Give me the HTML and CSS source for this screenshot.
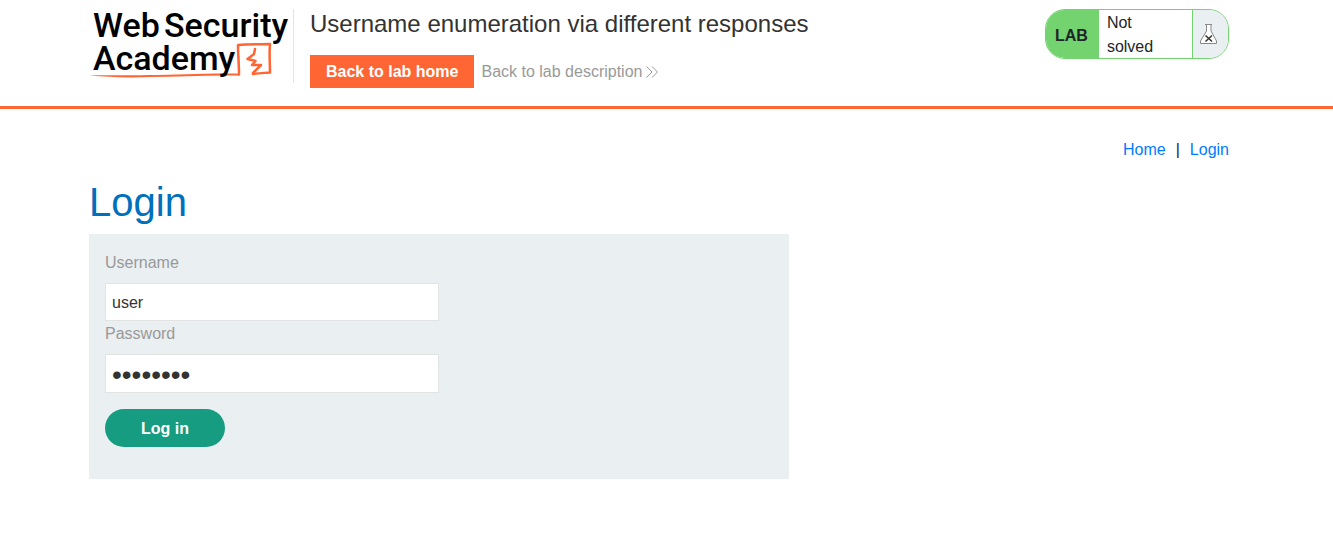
FILE: index.html
```html
<!DOCTYPE html>
<html lang="en">
<head>
<meta charset="utf-8">
<title>Username enumeration via different responses</title>
<link rel="stylesheet" href="styles.css">
</head>
<body>
<header class="lab-header">
  <div class="container header-row">
    <div class="logo">
      <svg width="204" height="74" viewBox="0 0 204 74" role="img" aria-label="Web Security Academy">
        <path d="M0 66.500 C20 65.500 40 67 60 66 C90 65.500 115 64 150 64.500 V66.500 C120 66 90 67.500 60 68 C35 69 20 68 0 66.500 Z" class="sketch-line"/>
        <path d="M150 65.500 C150 55 149 45 149 36 C160 34.500 170 35.500 181 35 C180 45 181 55 181 63.500 C175 64 170 64 164 65" class="sketch"/>
        <path d="M166 40 L165 45 L158.500 50 L166.500 52 L163 56 L172 56 L164 64" class="sketch"/>
        <g class="logo-text">
          <text x="4" y="28">Web</text>
          <text x="75" y="28">Security</text>
          <text x="4" y="61">Academy</text>
        </g>
      </svg>
    </div>
    <div class="title-block">
      <h2 class="lab-title">Username enumeration via different responses</h2>
      <div class="lab-links">
        <a class="button-orange" href="#">Back to lab home</a>
        <a class="link-back" href="#">Back to lab description
          <svg width="12" height="12" viewBox="0 0 12 12" aria-hidden="true"><path d="M0.500 0.500 L6 6 L0.500 11.500 M6 0.500 L11.500 6 L6 11.500"/></svg>
        </a>
      </div>
    </div>
    <div class="lab-status">
      <span class="status-tag">LAB</span>
      <p class="status-text">Not solved</p>
      <span class="status-icon">
        <svg width="18" height="20" viewBox="0 0 18 20" aria-hidden="true">
          <path class="flask" d="M5 0.500 H12 M6.500 1 V7 L0.500 17 V19.500 H16.500 V17 L11 7 V1"/>
          <path class="cross" d="M5.500 11.500 L12 17.500 M12 11.500 L5.500 17.500"/>
        </svg>
      </span>
    </div>
  </div>
</header>
<main class="container">
  <nav class="top-links"><a href="#">Home</a><span>|</span><a href="#">Login</a></nav>
  <h1 class="page-title">Login</h1>
  <form class="login-form">
    <label for="username">Username</label>
    <input id="username" type="text" value="user">
    <label for="password">Password</label>
    <input id="password" class="password" type="password" value="password">
    <button type="submit">Log in</button>
  </form>
</main>
</body>
</html>
```
FILE: styles.css
```css
* {
  box-sizing: border-box;
}

body {
  margin: 0;
  background: #fff;
  color: #212529;
  font: 16px/24px "Liberation Sans", Arial, sans-serif;
}

h1, h2, p {
  margin: 0;
  font-weight: 400;
}

a {
  color: #007bff;
  text-decoration: none;
}

.container {
  max-width: 1140px;
  margin-left: max(0px, calc((100% - 1155px) / 2));
}

.lab-header {
  padding: 9px 0 18px;
  border-bottom: 3px solid #ff6633;
}

.header-row {
  display: flex;
  align-items: flex-start;
}

.logo {
  height: 74px;
  border-right: 1px solid #e2e4e4;
  flex: none;
}

.logo svg {
  display: block;
  overflow: visible;
}

.logo-text {
  font: 500 34px Roboto, sans-serif;
  fill: #000;
}

.sketch {
  fill: none;
  stroke: #ff6633;
  stroke-width: 2.5;
  stroke-linejoin: round;
  stroke-linecap: round;
}

.sketch-line {
  fill: #ff6633;
}

.title-block {
  flex: 1;
  padding-left: 16px;
}

.lab-title {
  color: #333332;
  font-size: 24px;
  line-height: 30px;
}

.lab-links {
  display: flex;
  align-items: center;
  gap: 7px;
  margin-top: 16px;
}

.button-orange {
  padding: 0 16px;
  background: #ff6633;
  color: #fff;
  font-weight: 700;
  line-height: 33px;
}

.link-back {
  color: #999;
}

.link-back svg {
  margin-left: -1px;
  fill: none;
  stroke: #999;
  vertical-align: -1px;
}

.lab-status {
  display: flex;
  width: 184px;
  height: 50px;
  overflow: hidden;
  border: 1px solid #72d36f;
  border-radius: 20px;
}

.status-tag {
  padding: 1px 11px 0 9px;
  background: #72d36f;
  font-weight: 700;
  line-height: 50px;
}

.status-text {
  flex: 1;
  padding: 1px 38px 0 8px;
}

.status-icon {
  display: flex;
  align-items: center;
  width: 36px;
  padding-left: 7px;
  border-left: 1px solid #72d36f;
  background: #eaeff2;
}

.flask {
  fill: #fff;
  stroke: #888;
}

.cross {
  fill: none;
  stroke: #333;
  stroke-width: 1.5;
}

.top-links {
  display: flex;
  justify-content: flex-end;
  gap: 10px;
  padding-top: 29px;
}

.page-title {
  margin: 16px 0 8px;
  color: #0070bc;
  font-size: 40px;
  line-height: 48px;
}

.login-form {
  display: flex;
  flex-direction: column;
  align-items: flex-start;
  max-width: 700px;
  padding: 16px 16px 32px;
  background: #eaeff2;
}

.login-form label {
  padding-top: 1px;
  margin-bottom: 8px;
  color: #999;
}

.login-form input {
  width: 50%;
  height: 38px;
  padding: 2px 6px 0;
  border: 1px solid #e2e4e4;
  background: #fff;
  color: #333332;
  font: inherit;
}

.login-form .password {
  height: 39px;
  font-size: 28px;
}

.login-form button {
  width: 120px;
  height: 38px;
  margin-top: 16px;
  padding-top: 2px;
  border: 0;
  border-radius: 19px;
  background: #169c80;
  color: #fff;
  font: inherit;
  font-weight: 700;
}
```
